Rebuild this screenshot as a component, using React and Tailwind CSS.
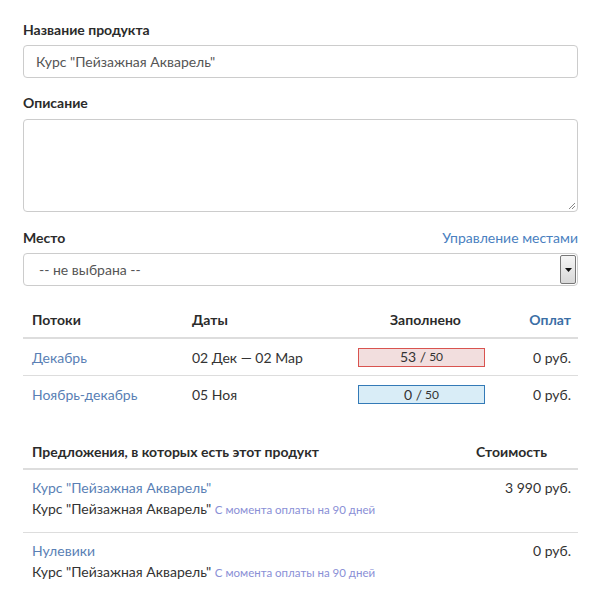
import React from 'react'

const font = { fontFamily: 'Lato, "Open Sans", sans-serif' }

function Label({ children }) {
  return <div className="text-[14px] font-bold text-[#2b2b2b] leading-[18px]">{children}</div>
}

function Fill({ value, max, tone }) {
  const cls = tone === 'red'
    ? 'border-[#d9534f] bg-[#f2dede]'
    : 'border-[#337ab7] bg-[#d9edf7]'
  return (
    <div className={`h-[19px] w-[127px] border ${cls} flex items-center justify-center text-[14px] text-[#333] leading-none`}>
      {value} / <span className="text-[12px] ml-[3px]">{max}</span>
    </div>
  )
}

const streams = [
  { name: 'Декабрь', dates: '02 Дек — 02 Мар', value: 53, tone: 'red' },
  { name: 'Ноябрь-декабрь', dates: '05 Ноя', value: 0, tone: 'blue' },
]

const offers = [
  { name: 'Курс "Пейзажная Акварель"', price: '3 990 руб.' },
  { name: 'Нулевики', price: '0 руб.' },
]

export default function App() {
  return (
    <div className="w-[596px] h-[599px] bg-white overflow-hidden pl-[23px] pr-[18px] pt-[21px] text-[#333]" style={font}>
      <Label>Название продукта</Label>
      <div className="mt-[6px] h-[33px] border border-[#ccc] rounded-[4px] flex items-center px-[12px] text-[14px] text-[#555]">
        Курс "Пейзажная Акварель"
      </div>

      <div className="mt-[16px]"><Label>Описание</Label></div>
      <div className="mt-[7px] h-[93px] border border-[#ccc] rounded-[4px] relative">
        <svg className="absolute right-[1px] bottom-[1px]" width="9" height="9" viewBox="0 0 9 9">
          <path d="M8 2L2 8M8 5L5 8" stroke="#888" strokeWidth="1" />
        </svg>
      </div>

      <div className="mt-[17px] flex items-center justify-between">
        <Label>Место</Label>
        <span className="text-[14px] text-[#4a7fbf] leading-[18px]">Управление местами</span>
      </div>
      <div className="mt-[6px] h-[33px] border border-[#ccc] rounded-[4px] flex items-center justify-between pl-[15px] text-[14px] text-[#555]">
        <span>-- не выбрана --</span>
        <div className="w-[16px] h-[29px] mr-[1px] border border-[#777] rounded-[2px] bg-gradient-to-b from-[#f6f6f6] to-[#d8d8d8] flex items-center justify-center">
          <svg width="7" height="4" viewBox="0 0 7 4"><path d="M0 0H7L3.5 4Z" fill="#111" /></svg>
        </div>
      </div>

      <div className="mt-[23px]">
        <div className="grid grid-cols-[160px_167px_143px_85px] h-[30px] pb-[7px] items-center text-[14px] font-bold text-[#2b2b2b] border-b-2 border-[#ddd]">
          <div className="pl-[9px]">Потоки</div>
          <div className="pl-[9px]">Даты</div>
          <div className="text-center pl-[8px]">Заполнено</div>
          <div className="text-right pr-[7px] text-[#3a6ea5]">Оплат</div>
        </div>
        {streams.map((s, i) => (
          <div key={s.name} className={`grid grid-cols-[160px_167px_143px_85px] h-[37px] items-center text-[14px] ${i === 0 ? 'border-b border-[#ddd]' : ''}`}>
            <div className="pl-[9px] text-[#5a7fb5]">{s.name}</div>
            <div className="pl-[9px]">{s.dates}</div>
            <div className="pl-[8px]"><Fill value={s.value} max={50} tone={s.tone} /></div>
            <div className="text-right pr-[7px]">0 руб.</div>
          </div>
        ))}
      </div>

      <div className="mt-[20px]">
        <div className="flex justify-between h-[37px] items-center text-[14px] font-bold text-[#2b2b2b] border-b-2 border-[#ddd] pt-[2px]">
          <div className="pl-[9px]">Предложения, в которых есть этот продукт</div>
          <div className="pr-[31px]">Стоимость</div>
        </div>
        {offers.map((o, i) => (
          <div key={o.name} className={`flex justify-between pt-[9px] h-[63px] ${i === 0 ? 'border-b border-[#ddd]' : ''}`}>
            <div className="pl-[9px]">
              <div className="text-[14px] text-[#5a7fb5] leading-[18px]">{o.name}</div>
              <div className="mt-[3px] text-[14px] leading-[18px]">
                Курс "Пейзажная Акварель" <span className="text-[11.5px] text-[#8a8fd6]">С момента оплаты на 90 дней</span>
              </div>
            </div>
            <div className="pr-[7px] text-[14px] leading-[18px]">{o.price}</div>
          </div>
        ))}
      </div>
    </div>
  )
}
